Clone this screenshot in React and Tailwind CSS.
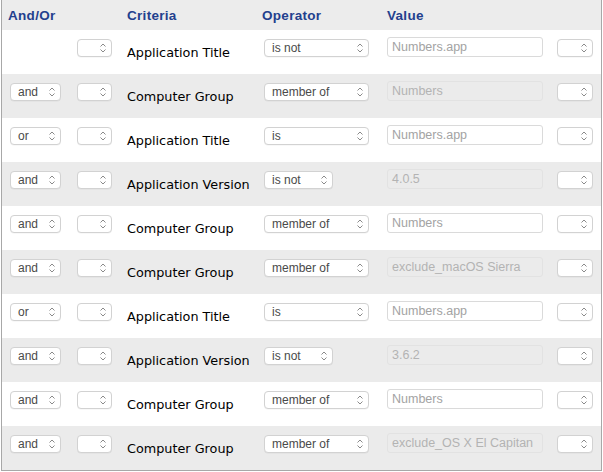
import React from 'react';

const rows = [
  { andOr: null, criteria: 'Application Title', op: 'is not', value: 'Numbers.app', active: true },
  { andOr: 'and', criteria: 'Computer Group', op: 'member of', value: 'Numbers', active: false },
  { andOr: 'or', criteria: 'Application Title', op: 'is', value: 'Numbers.app', active: true },
  { andOr: 'and', criteria: 'Application Version', op: 'is not', short: true, value: '4.0.5', active: false },
  { andOr: 'and', criteria: 'Computer Group', op: 'member of', value: 'Numbers', active: true },
  { andOr: 'and', criteria: 'Computer Group', op: 'member of', value: 'exclude_macOS Sierra', active: false },
  { andOr: 'or', criteria: 'Application Title', op: 'is', value: 'Numbers.app', active: true },
  { andOr: 'and', criteria: 'Application Version', op: 'is not', short: true, value: '3.6.2', active: false },
  { andOr: 'and', criteria: 'Computer Group', op: 'member of', value: 'Numbers', active: true },
  { andOr: 'and', criteria: 'Computer Group', op: 'member of', value: 'exclude_OS X El Capitan', active: false },
];

const Chevrons = () => (
  <svg width="8" height="12" viewBox="0 0 8 12" className="shrink-0">
    <path d="M1.5 4.5 L4 2 L6.5 4.5" fill="none" stroke="#8a8a8a" strokeWidth="1" />
    <path d="M1.5 7.5 L4 10 L6.5 7.5" fill="none" stroke="#8a8a8a" strokeWidth="1" />
  </svg>
);

const Select = ({ label, className }) => (
  <div
    className={`flex h-[18px] items-center justify-between rounded-[4px] border border-[#d2d2d2] bg-white pl-[7px] pr-[4px] text-[12px] leading-none text-[#4a4a4a] shadow-[0_0.5px_0.5px_rgba(0,0,0,0.06)] ${className}`}
  >
    <span>{label}</span>
    <Chevrons />
  </div>
);

const ValueField = ({ value, active }) => (
  <div
    className={`flex h-[20px] w-[156px] items-center overflow-hidden whitespace-nowrap rounded-[3px] border px-[4px] text-[12.5px] leading-none ${
      active ? 'border-[#dadada] bg-white text-[#a3a3a3]' : 'border-[#e2e2e2] bg-[#ebebeb] text-[#b3b3b3]'
    }`}
  >
    {value}
  </div>
);

export default function App() {
  return (
    <div className="bg-white pl-[1px]" style={{ fontFamily: '"Liberation Sans", Arial, sans-serif' }}>
      <div className="w-[601px] border-x border-b border-[#a8a8a8]">
        <div className="flex h-[30px] items-center bg-[#ececec] pt-[3px] text-[13.5px] font-bold tracking-[0.3px] text-[#23408e]">
          <div className="w-[125px] pl-[6px]">And/Or</div>
          <div className="w-[135px]">Criteria</div>
          <div className="w-[125px]">Operator</div>
          <div>Value</div>
        </div>
        {rows.map((r, i) => (
          <div key={i} className={`flex h-[44px] items-start ${r.active ? 'bg-white' : 'bg-[#ebebeb]'}`}>
            <div className="w-[75px] pl-[8px] pt-[9px]">
              {r.andOr && <Select label={r.andOr} className="w-[51px]" />}
            </div>
            <div className="w-[50px] pt-[9px]">
              <Select label="" className="w-[35px]" />
            </div>
            <div
              className="w-[137px] whitespace-nowrap pt-[14px] text-[12.8px] leading-[17px] text-black"
              style={{ fontFamily: '"DejaVu Sans", Verdana, sans-serif' }}
            >
              {r.criteria}
            </div>
            <div className="w-[123px] pt-[9px]">
              <Select label={r.op} className={r.short ? 'w-[69px]' : 'w-[105px]'} />
            </div>
            <div className="w-[170px] pt-[7px]">
              <ValueField value={r.value} active={r.active} />
            </div>
            <div className="pt-[9px]">
              <Select label="" className="w-[36px]" />
            </div>
          </div>
        ))}
      </div>
    </div>
  );
}
